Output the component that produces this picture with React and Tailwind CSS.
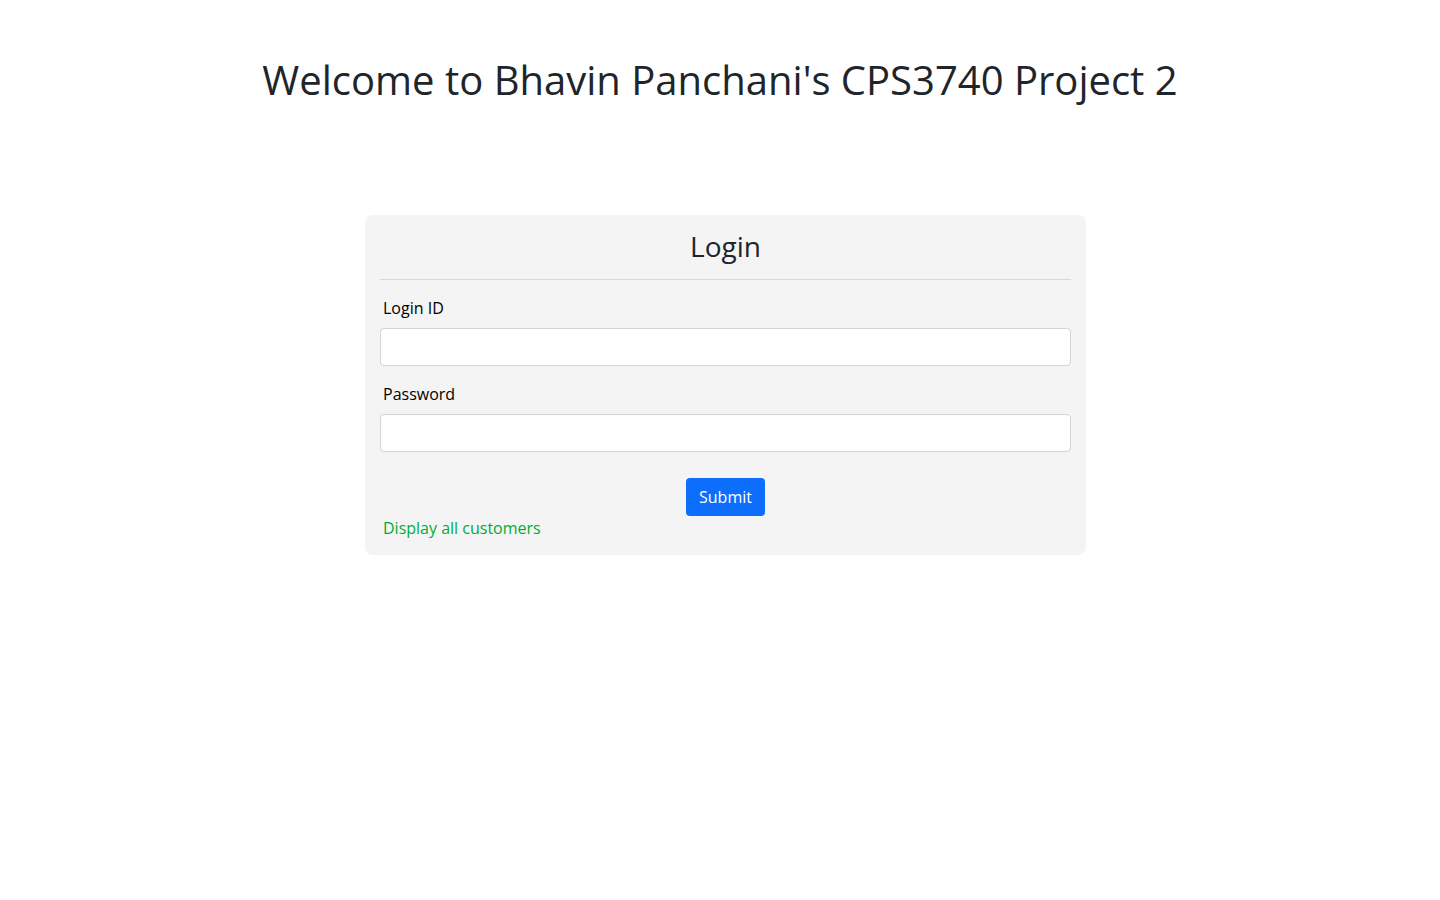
export default function App() {
  return (
    <div className="min-h-[900px] bg-white text-[#212529]" style={{ fontFamily: '"Open Sans", sans-serif' }}>
      <h1 className="pt-[56px] text-center text-[40px] leading-[48px] font-normal">
        Welcome to Bhavin Panchani's CPS3740 Project 2
      </h1>
      <div className="mt-[111px] flex justify-center pl-[11px]">
        <div className="w-[721px] rounded-lg bg-[#f4f4f4] p-[15px]">
          <h2 className="text-center text-[28px] leading-[32px] font-normal">Login</h2>
          <hr className="mt-[17px] border-0 border-t border-[#d9d9d9]" />
          <div className="mt-4 px-[3px] text-base leading-6 text-black">Login ID</div>
          <input
            type="text"
            className="mt-2 block h-[38px] w-full rounded border border-[#ced4da] bg-white px-3 outline-none"
          />
          <div className="mt-4 px-[3px] text-base leading-6 text-black">Password</div>
          <input
            type="password"
            className="mt-2 block h-[38px] w-full rounded border border-[#ced4da] bg-white px-3 outline-none"
          />
          <div className="mt-[26px] flex justify-center">
            <button className="h-[38px] w-[79px] rounded bg-[#0d6efd] text-base text-white">Submit</button>
          </div>
          <div className="px-[3px] text-base leading-6">
            <a href="#" className="text-[#00ad35]">Display all customers</a>
          </div>
        </div>
      </div>
    </div>
  );
}
